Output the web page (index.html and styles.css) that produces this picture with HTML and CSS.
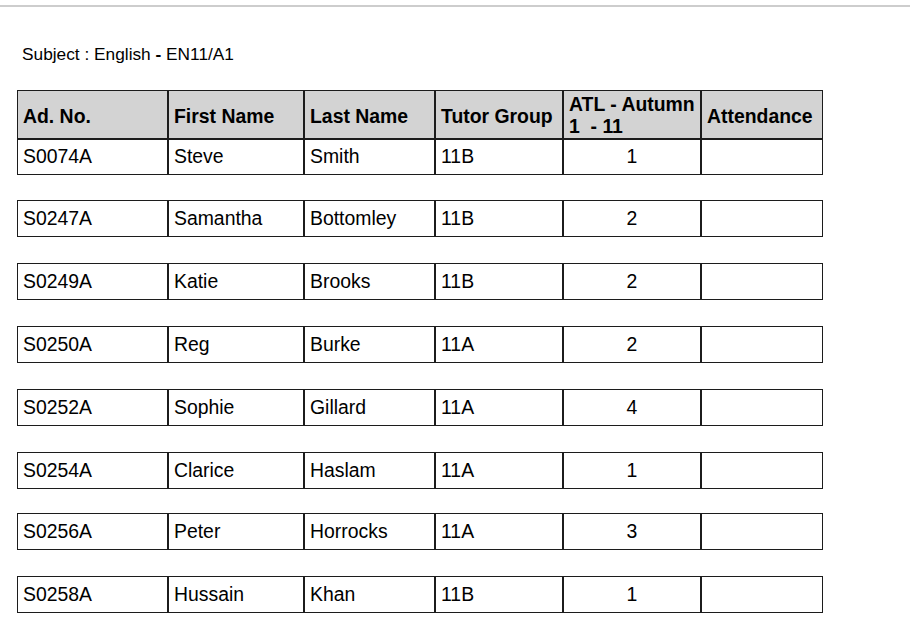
FILE: index.html
```html
<!DOCTYPE html>
<html>
<head>
<meta charset="utf-8">
<link rel="stylesheet" href="styles.css">
</head>
<body>
<div class="rule"></div>
<div class="sheet">
  <p class="subject">Subject : English <b>-</b> EN11/A1</p>
  <div class="block first">
    <div class="row head">
      <div class="cell">Ad. No.</div>
      <div class="cell">First Name</div>
      <div class="cell">Last Name</div>
      <div class="cell">Tutor Group</div>
      <div class="cell atl">ATL - Autumn 1&nbsp; - 11</div>
      <div class="cell">Attendance</div>
    </div>
    <div class="row">
      <div class="cell">S0074A</div><div class="cell">Steve</div><div class="cell">Smith</div><div class="cell">11B</div><div class="cell num">1</div><div class="cell"></div>
    </div>
  </div>
  <div class="block second">
    <div class="row">
      <div class="cell">S0247A</div><div class="cell">Samantha</div><div class="cell">Bottomley</div><div class="cell">11B</div><div class="cell num">2</div><div class="cell"></div>
    </div>
  </div>
  <div class="block">
    <div class="row">
      <div class="cell">S0249A</div><div class="cell">Katie</div><div class="cell">Brooks</div><div class="cell">11B</div><div class="cell num">2</div><div class="cell"></div>
    </div>
  </div>
  <div class="block">
    <div class="row">
      <div class="cell">S0250A</div><div class="cell">Reg</div><div class="cell">Burke</div><div class="cell">11A</div><div class="cell num">2</div><div class="cell"></div>
    </div>
  </div>
  <div class="block">
    <div class="row">
      <div class="cell">S0252A</div><div class="cell">Sophie</div><div class="cell">Gillard</div><div class="cell">11A</div><div class="cell num">4</div><div class="cell"></div>
    </div>
  </div>
  <div class="block">
    <div class="row">
      <div class="cell">S0254A</div><div class="cell">Clarice</div><div class="cell">Haslam</div><div class="cell">11A</div><div class="cell num">1</div><div class="cell"></div>
    </div>
  </div>
  <div class="block tight">
    <div class="row">
      <div class="cell">S0256A</div><div class="cell">Peter</div><div class="cell">Horrocks</div><div class="cell">11A</div><div class="cell num">3</div><div class="cell"></div>
    </div>
  </div>
  <div class="block">
    <div class="row">
      <div class="cell">S0258A</div><div class="cell">Hussain</div><div class="cell">Khan</div><div class="cell">11B</div><div class="cell num">1</div><div class="cell"></div>
    </div>
  </div>
</div>
</body>
</html>
```
FILE: styles.css
```css
html, body {
  margin: 0;
  padding: 0;
  background: #fff;
}
body {
  font-family: "Liberation Sans", Arial, sans-serif;
  color: #000;
}
.rule {
  margin-top: 5px;
  height: 2px;
  background: #cdcdcd;
}
.sheet {
  padding: 0 17px;
}
.subject {
  margin: 37px 0 0 5px;
  font-size: 17.3px;
  line-height: 20px;
}
.subject b {
  font-weight: bold;
}
.block {
  margin-top: 26px;
  width: 806px;
}
.block.first {
  margin-top: 26px;
}
.block.second {
  margin-top: 25px;
}
.block.tight {
  margin-top: 24px;
}
.row {
  display: grid;
  grid-template-columns: 151px 136px 131px 128px 138px 122px;
  height: 37px;
}
.row.head {
  height: 49px;
  background: #d3d3d3;
  font-weight: bold;
}
.row.head .cell {
  padding-top: 2px;
  padding-bottom: 0;
}
.row.head .cell.atl {
  padding-top: 0;
}
.block.first .row:not(.head) {
  height: 36px;
}
.block.first .row:not(.head) .cell {
  padding-bottom: 3px;
}
.cell {
  box-sizing: border-box;
  border: 1px solid #1c1c1c;
  padding: 0 5px 2px;
  display: flex;
  align-items: center;
  font-size: 19.4px;
  line-height: 22px;
  overflow: hidden;
}
.cell.num {
  justify-content: center;
}
```
